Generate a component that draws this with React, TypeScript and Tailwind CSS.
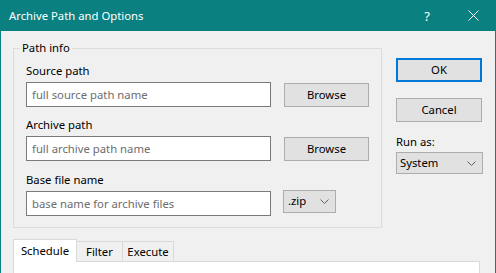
import React from "react";

const inputCls =
  "h-[25px] w-[245px] border border-[#7a7a7a] bg-white pl-[5px] leading-[23px] text-[#6d6d6d]";
const btnCls =
  "flex items-center justify-center border border-[#adadad] bg-[#e1e1e1] text-black";

function Chevron() {
  return (
    <svg width="9" height="5" viewBox="0 0 9 5" className="shrink-0">
      <path d="M0.5 0.5 L4.5 4.5 L8.5 0.5" fill="none" stroke="#606060" strokeWidth="1" />
    </svg>
  );
}

function Field({ label, placeholder, mt, children }: { label: string; placeholder: string; mt: string; children: React.ReactNode }) {
  return (
    <div className={mt}>
      <div className="h-[16px] leading-[16px]">{label}</div>
      <div className="mt-[3px] flex items-start">
        <div className={inputCls}>{placeholder}</div>
        {children}
      </div>
    </div>
  );
}

export default function App() {
  return (
    <div className="flex h-[273px] w-[496px] flex-col overflow-hidden border-x border-[#0a8080] bg-[#f0f0f0] font-['Noto_Sans',sans-serif] text-[11.3px] text-black">
      {/* title bar */}
      <div className="flex h-[31px] shrink-0 items-center bg-[#0a8080] pl-[8px] text-white">
        <span className="leading-[16px]">Archive Path and Options</span>
        <span className="ml-auto text-[13px] leading-[16px]">?</span>
        <svg width="11" height="11" viewBox="0 0 11 11" className="ml-[38px] mr-[16px]">
          <path d="M0.5 0.5 L10.5 10.5 M10.5 0.5 L0.5 10.5" stroke="white" strokeWidth="1" />
        </svg>
      </div>

      <div className="flex pl-[12px] pt-[9px]">
        <fieldset className="w-[369px] border border-[#dcdcdc]">
          <legend className="ml-[6px] px-[2px] leading-[16px]">Path info</legend>
          <div className="px-[12px] pb-[11px] pt-[7px]">
            <Field label="Source path" placeholder="full source path name" mt="">
              <div className={`${btnCls} ml-[13px] mt-px h-[24px] w-[85px]`}>Browse</div>
            </Field>
            <Field label="Archive path" placeholder="full archive path name" mt="mt-[10px]">
              <div className={`${btnCls} ml-[13px] mt-px h-[24px] w-[85px]`}>Browse</div>
            </Field>
            <Field label="Base file name" placeholder="base name for archive files" mt="mt-[11px]">
              <div className={`${btnCls} ml-[12px] mt-[-1px] h-[23px] w-[53px] !justify-between pl-[4px] pr-[6px]`}>
                <span>.zip</span>
                <Chevron />
              </div>
            </Field>
          </div>
        </fieldset>

        <div className="ml-[14px] flex flex-col pt-[18px]">
          <div className={`${btnCls} h-[24px] w-[86px] !border-2 !border-[#0078d7]`}>OK</div>
          <div className={`${btnCls} mt-[16px] h-[24px] w-[86px]`}>Cancel</div>
          <div className="mt-[12px] h-[16px] leading-[16px]">Run as:</div>
          <div className={`${btnCls} mt-[2px] h-[22px] w-[87px] !justify-between pl-[3px] pr-[6px]`}>
            <span>System</span>
            <Chevron />
          </div>
        </div>
      </div>

      {/* tabs */}
      <div className="mt-[11px] flex flex-col pl-[12px]">
        <div className="flex items-end">
          <div className="relative z-10 mb-[-1px] flex h-[23px] w-[64px] items-start justify-center border border-b-0 border-[#d9d9d9] bg-white pt-[3px] leading-[16px]">
            Schedule
          </div>
          <div className="flex h-[20px] w-[46px] items-center justify-center border border-l-0 border-b-0 border-[#d9d9d9] leading-[16px]">
            Filter
          </div>
          <div className="flex h-[20px] w-[51px] items-center justify-center border border-l-0 border-b-0 border-[#d9d9d9] leading-[16px]">
            Execute
          </div>
        </div>
        <div className="h-[40px] w-[467px] border border-[#d9d9d9] bg-white" />
      </div>
    </div>
  );
}
